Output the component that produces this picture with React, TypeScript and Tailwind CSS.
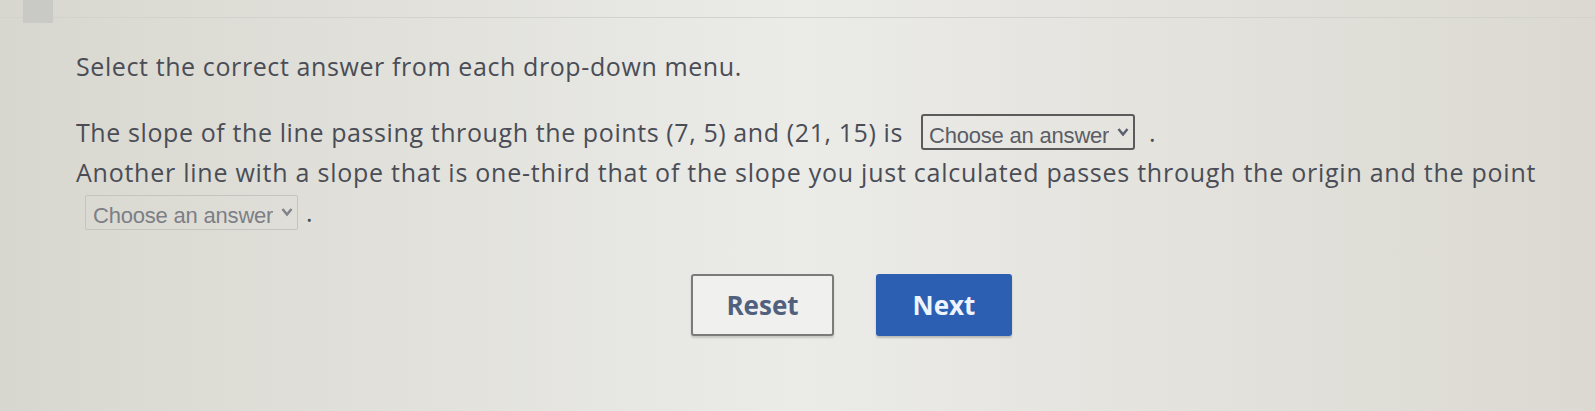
import React, { useState } from "react";

const ANSWERS = ["Choose an answer", "1/3", "2/3", "5/7", "7/5"];

// Native select, styled to look like the quiz drop-down box
const AnswerSelect = ({ active = false }: { active?: boolean }) => {
  const [value, setValue] = useState(ANSWERS[0]);
  return (
    <span
      className={
        active
          ? "relative inline-flex h-[36px] w-[214px] shrink-0 items-center rounded-[3px] border-2 border-[#5b5b5b]"
          : "relative inline-flex h-[35px] w-[213px] shrink-0 items-center rounded-[2px] border border-[#c4c4c0]"
      }
    >
      <select
        value={value}
        onChange={(e) => setValue(e.target.value)}
        className={
          active
            ? "h-full w-full appearance-none bg-transparent pl-[6px] pr-6 text-[22px] tracking-[-0.2px] text-[#5a5d66] outline-none"
            : "h-full w-full appearance-none bg-transparent pl-[7px] pr-6 text-[22px] tracking-[-0.2px] text-[#7c7f86] outline-none"
        }
        style={{ fontFamily: '"Liberation Sans", Arial, sans-serif' }}
      >
        {ANSWERS.map((a) => (
          <option key={a} value={a}>
            {a}
          </option>
        ))}
      </select>
      <svg
        className="pointer-events-none absolute right-[4px] top-1/2 -translate-y-1/2"
        width="12"
        height="9"
        viewBox="0 0 12 9"
      >
        <path
          d="M1.5 1.5 L6 7 L10.5 1.5"
          fill="none"
          stroke={active ? "#5d6070" : "#80838c"}
          strokeWidth="2.5"
        />
      </svg>
    </span>
  );
};

export default function App() {
  return (
    <div
      className="relative h-[411px] w-full overflow-hidden bg-linear-to-r from-[#d8d7cf] via-[#ebebe8] to-[#dbd9d1] text-[#4a4d56]"
      style={{ fontFamily: '"Open Sans", "Noto Sans", sans-serif' }}
    >
      {/* top toolbar strip */}
      <div className="flex h-[18px] items-start border-b border-[#d3d3cd]">
        <div className="ml-[23px] h-[23px] w-[30px] bg-[#c9c9c6]" />
      </div>

      <div className="pl-[76px] pt-[34px] text-[25px] tracking-[0.6px]">
        <p className="leading-[28px]">Select the correct answer from each drop-down menu.</p>

        <div className="mt-[32px] leading-[40px]">
          <p className="flex h-[40px] items-center whitespace-pre">
            The slope of the line passing through the points (7, 5) and (21, 15) is
            <span className="ml-[18px] flex items-center">
              <AnswerSelect active />
            </span>
            <span className="ml-[14px]">.</span>
          </p>
          <p className="h-[40px] whitespace-nowrap tracking-[0.75px]">
            Another line with a slope that is one-third that of the slope you just calculated passes through the origin and the point
          </p>
          <p className="flex h-[40px] items-center pl-[9px]">
            <AnswerSelect />
            <span className="ml-[8px]">.</span>
          </p>
        </div>

        <div className="mt-[42px] flex gap-[42px] pl-[615px]">
          <button className="h-[62px] w-[143px] rounded-[3px] border-2 border-[#7b7b7b] bg-[#f0f0ee] text-[26px] font-bold tracking-normal text-[#50607d] shadow-[0_2px_2px_rgba(0,0,0,0.15)]">
            Reset
          </button>
          <button className="h-[62px] w-[136px] rounded-[3px] bg-[#2c5fb2] text-[26px] font-bold tracking-normal text-[#eef4ff] shadow-[0_2px_2px_rgba(0,0,0,0.2)]">
            Next
          </button>
        </div>
      </div>
    </div>
  );
}
